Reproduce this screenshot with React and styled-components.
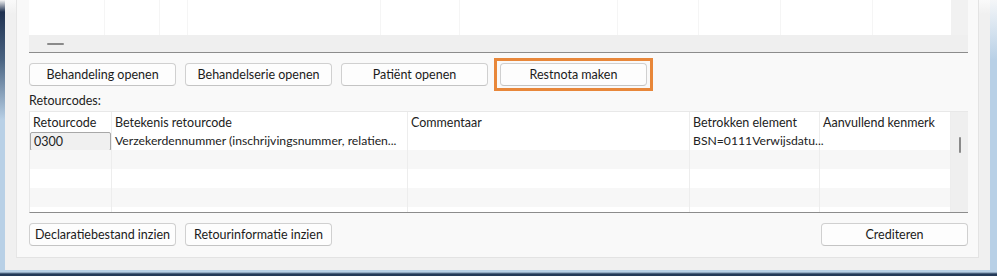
import React from 'react'
import styled, { createGlobalStyle } from 'styled-components'

const GlobalStyle = createGlobalStyle`
    html, body {
        margin: 0;
        padding: 0;
    }
    body {
        width: 997px;
        height: 276px;
        overflow: hidden;
        background: linear-gradient(to bottom, #f4f6f8 0px, #b8d0e6 60px, #b8d0e6 272px, #243a58 274px);
        font-family: "Segoe UI", Lato, "Noto Sans", sans-serif;
        font-size: 12px;
        color: #222;
    }
`

const topColumns = [76, 55, 28, 193, 79, 158, 81, 82, 92]
const columns = [
    { title: 'Retourcode', width: 82 },
    { title: 'Betekenis retourcode', width: 296 },
    { title: 'Commentaar', width: 282 },
    { title: 'Betrokken element', width: 130 },
    { title: 'Aanvullend kenmerk', width: 131 },
]
const rows = [
    ['0300', 'Verzekerdennummer (inschrijvingsnummer, relatien...', '', 'BSN=0111Verwijsdatu...', ''],
    ['', '', '', '', ''],
    ['', '', '', '', ''],
    ['', '', '', '', ''],
]

const App = () => {
    return (
        <>
            <GlobalStyle />
            <Window>
                <Edge />
                <Frame>
                    <Panel>
                        <TopGrid>
                            <TopBody>
                                <TopCells>
                                    {topColumns.map((w, i) => <TopCell key={i} style={{ width: w }} />)}
                                </TopCells>
                                <Corner />
                            </TopBody>
                            <HScroll>
                                <Dash />
                            </HScroll>
                        </TopGrid>

                        <ButtonRow>
                            <Button>Behandeling openen</Button>
                            <Button>Behandelserie openen</Button>
                            <Button>Patiënt openen</Button>
                            <Highlight>
                                <Button>Restnota maken</Button>
                            </Highlight>
                        </ButtonRow>

                        <Label>Retourcodes:</Label>

                        <Table>
                            <TableBody>
                                <HeaderRow>
                                    {columns.map(c => <HeadCell key={c.title} $w={c.width}>{c.title}</HeadCell>)}
                                </HeaderRow>
                                {rows.map((r, i) => (
                                    <Row key={i} $odd={i % 2 === 1}>
                                        {r.map((v, j) => (
                                            <Cell key={j} $w={columns[j].width}>
                                                {i === 0 && j === 0 ? <CodeBox>{v}</CodeBox> : v}
                                            </Cell>
                                        ))}
                                    </Row>
                                ))}
                                <Filler>
                                    {columns.map(c => <Cell key={c.title} $w={c.width} />)}
                                </Filler>
                            </TableBody>
                            <VScroll>
                                <Thumb />
                            </VScroll>
                        </Table>

                        <BottomRow>
                            <Group>
                                <Button>Declaratiebestand inzien</Button>
                                <Button>Retourinformatie inzien</Button>
                            </Group>
                            <Button>Crediteren</Button>
                        </BottomRow>
                    </Panel>
                </Frame>
            </Window>
        </>
    )
}

export default App

const Window = styled.div`
    display: flex;
    height: 270px;
`
const Edge = styled.div`
    width: 5px;
    background: linear-gradient(to bottom, #f5f5f5 0px, #1f3150 12px, #4a6482 60px, #b8d0e6 120px);
`
const Frame = styled.div`
    width: 985px;
    height: 270px;
    background: linear-gradient(to bottom, #fafafa 0px, #f0f0f0 14px);
    box-sizing: border-box;
    padding-left: 11px;
    padding-right: 11px;
`
const Panel = styled.div`
    height: 258px;
    box-sizing: border-box;
    background: #f9f9f9;
    border-left: 1px solid #e6e6e6;
    border-right: 1px solid #e3e3e3;
    border-bottom: 1px solid #e3e3e3;
    padding: 0 10px 0 12px;
    display: flex;
    flex-direction: column;
`
const TopGrid = styled.div`
    height: 53px;
    display: flex;
    flex-direction: column;
    border-bottom: 1px solid #8c8c8c;
    box-sizing: border-box;
`
const TopBody = styled.div`
    height: 35px;
    display: flex;
`
const TopCells = styled.div`
    flex: 1;
    display: flex;
    background: #fff;
`
const TopCell = styled.div`
    height: 100%;
    border-right: 1px solid #f5f5f5;
    box-sizing: border-box;
`
const Corner = styled.div`
    width: 17px;
    background: #f1f1f1;
`
const HScroll = styled.div`
    flex: 1;
    background: #efefef;
    display: flex;
    align-items: center;
    padding-left: 18px;
`
const Dash = styled.div`
    width: 17px;
    height: 2px;
    background: #8a8a8a;
    border-radius: 1px;
`
const ButtonRow = styled.div`
    display: flex;
    align-items: center;
    gap: 9px;
    height: 33px;
    margin-top: 5px;
`
const Button = styled.button`
    width: 147px;
    height: 23px;
    box-sizing: border-box;
    background: #fdfdfd;
    border: 1px solid #d0d0d0;
    border-bottom-color: #c4c4c4;
    border-radius: 4px;
    font-family: inherit;
    font-size: 12.5px;
    color: #1b1b1b;
    padding: 0;
    cursor: pointer;
`
const Highlight = styled.div`
    margin-left: -3px;
    width: 159px;
    height: 33px;
    box-sizing: border-box;
    border: 3px solid #e8873a;
    display: flex;
    align-items: center;
    justify-content: center;
`
const Label = styled.div`
    margin-top: 1px;
    height: 19px;
    line-height: 17px;
    font-size: 12.5px;
`
const Table = styled.div`
    width: 939px;
    height: 102px;
    box-sizing: border-box;
    border-top: 1px solid #e8e8e8;
    border-left: 1px solid #e8e8e8;
    border-bottom: 1px solid #8c8c8c;
    display: flex;
    background: #fff;
`
const TableBody = styled.div`
    flex: 1;
    display: flex;
    flex-direction: column;
`
const HeaderRow = styled.div`
    display: flex;
    height: 19px;
    background: #fff;
`
const Row = styled.div`
    display: flex;
    height: 19px;
    background: ${p => (p.$odd ? '#f7f7f7' : '#ffffff')};
`
const Filler = styled.div`
    flex: 1;
    display: flex;
`
const HeadCell = styled.div`
    width: ${p => p.$w}px;
    flex: none;
    box-sizing: border-box;
    border-right: 1px solid #ededed;
    padding: 0 0 0 3px;
    line-height: 21px;
    white-space: nowrap;
    font-size: 12.5px;
`
const Cell = styled(HeadCell)`
    line-height: 19px;
    font-size: 12.2px;
`
const CodeBox = styled.div`
    margin: 1px 0 0 -3px;
    height: 19px;
    box-sizing: border-box;
    background: #f0f0f0;
    border: 1px solid #a8a8a8;
    border-radius: 2px;
    padding: 0 3px;
    line-height: 17px;
    font-size: 12.5px;
`
const VScroll = styled.div`
    width: 18px;
    background: #efefef;
    display: flex;
    justify-content: center;
    padding-top: 25px;
    box-sizing: border-box;
`
const Thumb = styled.div`
    width: 2px;
    height: 16px;
    background: #8a8a8a;
    border-radius: 1px;
`
const BottomRow = styled.div`
    margin-top: 10px;
    display: flex;
    justify-content: space-between;
    width: 939px;
`
const Group = styled.div`
    display: flex;
    gap: 9px;
`
